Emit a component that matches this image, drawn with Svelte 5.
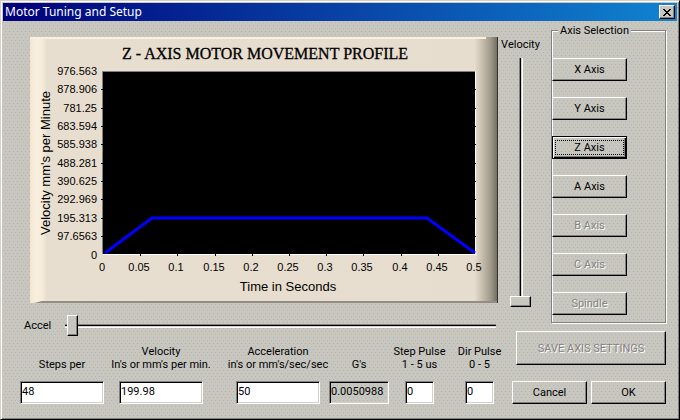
<script lang="ts">
  const yLabels = ['976.563', '878.906', '781.25', '683.594', '585.938', '488.281', '390.625', '292.969', '195.313', '97.6563', '0'];
  const xLabels = ['0', '0.05', '0.1', '0.15', '0.2', '0.25', '0.3', '0.35', '0.4', '0.45', '0.5'];

  const axes = [
    { name: 'X Axis', enabled: true },
    { name: 'Y Axis', enabled: true },
    { name: 'Z Axis', enabled: true },
    { name: 'A Axis', enabled: true },
    { name: 'B Axis', enabled: false },
    { name: 'C Axis', enabled: false },
    { name: 'Spindle', enabled: false }
  ];

  let selected = $state('Z Axis');
  let velocityPos = $state(0);
  let accelPos = $state(0);

  let fields = $state([
    { id: 'steps', lines: ['Steps per'], value: '48', size: 'wide', readonly: false },
    { id: 'velocity', lines: ['Velocity', "In's or mm's per min."], value: '199.98', size: 'wide', readonly: false },
    { id: 'accel', lines: ['Acceleration', "in's or mm's/sec/sec"], value: '50', size: 'wide', readonly: false },
    { id: 'gs', lines: ["G's"], value: '0.0050988', size: 'medium', readonly: true },
    { id: 'step-pulse', lines: ['Step Pulse', '1 - 5 us'], value: '0', size: 'small', readonly: false },
    { id: 'dir-pulse', lines: ['Dir Pulse', '0 - 5'], value: '0', size: 'small', readonly: false }
  ]);

  const tickX = (i: number) => 73 + Math.round(i * 37.2);
  const tickY = (i: number) => 34 + Math.round(i * 18.35);
</script>

<div class="dialog">
  <header class="titlebar">
    <h1>Motor Tuning and Setup</h1>
    <button class="close" aria-label="Close">
      <svg width="8" height="7" viewBox="0 0 8 7" shape-rendering="crispEdges">
        <path d="M0 0h2v1h1v1h2v-1h1v-1h2v1h-1v1h-1v1h-1v1h1v1h1v1h1v1h-2v-1h-1v-1h-2v1h-1v1h-2v-1h1v-1h1v-1h1v-1h-1v-1h-1v-1h-1z" />
      </svg>
    </button>
  </header>

  <main>
    <div class="left">
      <svg class="chart" viewBox="0 0 468 266" role="img" aria-label="Z axis motor movement profile">
        <defs>
          <linearGradient id="panel">
            <stop offset="0" stop-color="#f2e6d2" />
            <stop offset="0.012" stop-color="#f8efdf" />
            <stop offset="0.026" stop-color="#f6ecdb" />
            <stop offset="0.036" stop-color="#e8decf" />
            <stop offset="0.95" stop-color="#e7ddcf" />
            <stop offset="0.965" stop-color="#c9c0b0" />
            <stop offset="0.985" stop-color="#9e9888" />
            <stop offset="1" stop-color="#6c685e" />
          </linearGradient>
        </defs>
        <rect width="468" height="266" fill="url(#panel)" />
        <path d="M0 0H456V2H0z" fill="#faf0e0" />
        <path d="M12 264H468V266H4z" fill="#968d82" />
        <path d="M467 0h1v266h-1z" fill="#33332f" />

        <text class="title" x="235" y="22">Z - AXIS MOTOR MOVEMENT PROFILE</text>

        <rect x="72" y="34" width="373" height="183" />
        <path d="M72 34H445" transform="translate(0 .5)" stroke="#808080" />
        <path d="M72 34V217" transform="translate(.5 0)" stroke="#808080" />
        <path d="M72 217H446M445 34V218" transform="translate(.5 .5)" stroke="#fff" />

        {#each yLabels as label, i}
          <text class="tick end" x="67" y={tickY(i) + 4}>{label}</text>
          {#if i > 0 && i < 10}
            <rect x="71" y={tickY(i)} width="2" height="1" />
            <rect x="444" y={tickY(i)} width="2" height="1" />
          {/if}
        {/each}
        {#each xLabels as label, i}
          <text class="tick middle" x={tickX(i) - 1} y="234">{label}</text>
          {#if i > 0 && i < 10}
            <rect x={tickX(i)} y="216" width="1" height="3" />
          {/if}
        {/each}

        <text class="axis" x="258" y="254">Time in Seconds</text>
        <text class="axis" transform="translate(20 126) rotate(-90)">Velocity mm's per Minute</text>

        <polyline points="75,216 122,181 397,181 445,216" />
      </svg>

      <div class="accel">
        <label for="accel-slider">Accel</label>
        <input id="accel-slider" type="range" min="0" max="100" bind:value={accelPos} />
      </div>

      <div class="fields">
        {#each fields as field}
          <div class="field {field.size}">
            <label for={field.id}>
              {#each field.lines as line}
                <span>{line}</span>
              {/each}
            </label>
            <input id={field.id} type="text" bind:value={field.value} readonly={field.readonly} />
          </div>
        {/each}
      </div>
    </div>

    <div class="right">
      <div class="top">
        <div class="velocity">
          <label for="velocity-slider">Velocity</label>
          <input id="velocity-slider" type="range" min="0" max="100" bind:value={velocityPos} />
        </div>
        <fieldset>
          <legend>Axis Selection</legend>
          {#each axes as axis}
            <button
              class="btn"
              class:selected={selected === axis.name}
              disabled={!axis.enabled}
              onclick={() => (selected = axis.name)}
            >
              <span>{axis.name}</span>
            </button>
          {/each}
        </fieldset>
      </div>
      <button class="btn save" disabled>SAVE AXIS SETTINGS</button>
      <div class="actions">
        <button class="btn">Cancel</button>
        <button class="btn">OK</button>
      </div>
    </div>
  </main>
</div>

<style>
  :global(body) {
    margin: 0;
    background: #c7c7c0;
  }

  .dialog {
    --face: #c7c7c0;
    box-sizing: border-box;
    min-height: 100vh;
    display: flex;
    flex-direction: column;
    padding: 1px;
    border: 1px solid;
    border-color: #d4d0c8 #000 #000 #d4d0c8;
    box-shadow: inset 1px 1px #fff, inset -1px -1px #808080;
    background-color: var(--face);
    /* dithered 256-colour face */
    background-image:
      conic-gradient(from 270deg at 1px 1px, #b2b2b4 90deg, transparent 0),
      conic-gradient(from 270deg at 1px 1px, #b8b5a2 90deg, transparent 0);
    background-size: 4px 6px;
    background-position: 0 0, 2px 3px;
    font: 11px/13px Roboto, sans-serif;
    color: #000;
  }

  .titlebar {
    display: flex;
    align-items: center;
    justify-content: space-between;
    height: 18px;
    margin: 1px 1px 0;
    padding: 0 2px;
    background: linear-gradient(to right, #00007b, #1084d0);
  }

  h1 {
    margin: 0;
    color: #fff;
    font: 12px/18px "Noto Sans", sans-serif;
  }

  button {
    font: inherit;
    color: inherit;
    border: 1px solid;
    border-color: #fff #000 #000 #fff;
    border-radius: 0;
    background: transparent;
    box-shadow: inset -1px -1px #808080;
    padding: 0;
  }

  .close {
    width: 16px;
    height: 14px;
    display: grid;
    place-items: center;
    background: var(--face);
  }

  main {
    flex: 1;
    display: flex;
    gap: 4px;
    padding: 3px 12px 14px 18px;
  }

  .left {
    flex: 1;
    min-width: 0;
    display: flex;
    flex-direction: column;
  }

  .chart {
    display: block;
    margin: 13px 0 0 10px;
  }

  .chart text {
    font-family: "Liberation Sans", Arial, sans-serif;
    fill: #000;
  }

  .chart .title {
    font-family: "Liberation Serif", "Times New Roman", serif;
    font-size: 16px;
    stroke: #000;
    stroke-width: 0.3px;
    text-anchor: middle;
  }

  .chart .tick {
    font-size: 11px;
  }

  .chart .axis {
    font-size: 13px;
  }

  .end {
    text-anchor: end;
  }

  .middle,
  .axis {
    text-anchor: middle;
  }

  polyline {
    fill: none;
    stroke: #00f;
    stroke-width: 3;
  }

  .accel {
    display: flex;
    align-items: center;
    gap: 14px;
    margin: 12px 2px 0 4px;
  }

  input[type='range'] {
    appearance: none;
    margin: 0;
    background: transparent;
  }

  #accel-slider {
    flex: 1;
    min-width: 0;
    height: 21px;
    padding: 0 2px;
    background: linear-gradient(#808080 0 1px, #000 1px 2px, #d4d0c8 2px 3px, #fff 3px 4px) center / 100% 4px no-repeat;
  }

  input[type='range']::-webkit-slider-thumb {
    appearance: none;
    box-sizing: border-box;
    width: 11px;
    height: 21px;
    border: 1px solid;
    border-color: #fff #000 #000 #fff;
    border-radius: 0;
    background: var(--face);
    box-shadow: inset -1px -1px #808080;
  }

  .fields {
    display: grid;
    grid-template-columns:
      minmax(0, 99fr) minmax(0, 117fr) minmax(0, 93fr)
      minmax(0, 76fr) minmax(0, 60fr) minmax(0, 33fr);
    align-items: end;
    margin-top: auto;
  }

  .field {
    display: flex;
    flex-direction: column;
    align-items: center;
    gap: 10px;
  }

  .wide {
    width: 84px;
  }

  .medium {
    width: 60px;
  }

  .small {
    width: 29px;
  }

  .field label {
    text-align: center;
    white-space: nowrap;
  }

  .field span {
    display: block;
  }

  input[type='text'] {
    box-sizing: border-box;
    width: 100%;
    height: 23px;
    padding: 0 1px 2px;
    border: 1px solid;
    border-color: #808080 #fff #fff #808080;
    border-radius: 0;
    box-shadow: inset 1px 1px #000, inset -1px -1px #d4d0c8;
    background: #fff;
    font: inherit;
  }

  input[readonly] {
    background: transparent;
  }

  .right {
    width: 164px;
    display: flex;
    flex-direction: column;
  }

  .top {
    display: flex;
    justify-content: space-between;
  }

  .velocity {
    display: flex;
    flex-direction: column;
    align-items: center;
    gap: 7px;
    width: 37px;
    padding-top: 14px;
  }

  #velocity-slider {
    writing-mode: vertical-lr;
    direction: rtl;
    width: 21px;
    height: 249px;
    background: linear-gradient(to right, #808080 0 1px, #000 1px 2px, #d4d0c8 2px 3px, #fff 3px 4px) center / 4px 100% no-repeat;
  }

  #velocity-slider::-webkit-slider-thumb {
    width: 21px;
    height: 11px;
  }

  fieldset {
    box-sizing: border-box;
    width: 115px;
    min-width: 0;
    margin: 0;
    padding: 21px 0 7px;
    display: flex;
    flex-direction: column;
    gap: 16px;
    border: 1px solid #808080;
    box-shadow: 1px 1px #fff, inset 1px 1px #fff;
  }

  legend {
    margin-left: 6px;
    padding: 0 2px;
    background: var(--face);
  }

  .btn {
    width: 75px;
    height: 23px;
  }

  .btn:disabled {
    color: #848280;
    text-shadow: 1px 1px #fff;
  }

  .selected {
    padding: 2px;
    border-color: #000;
    box-shadow: inset 1px 1px #fff, inset -1px -1px #000, inset -2px -2px #808080;
  }

  .selected span {
    display: block;
    border: 1px dotted #000;
    line-height: 13px;
  }

  .save {
    width: auto;
    height: 34px;
    margin: 8px 0 0 14px;
  }

  .actions {
    display: flex;
    justify-content: flex-end;
    gap: 4px;
    margin-top: auto;
  }
</style>
